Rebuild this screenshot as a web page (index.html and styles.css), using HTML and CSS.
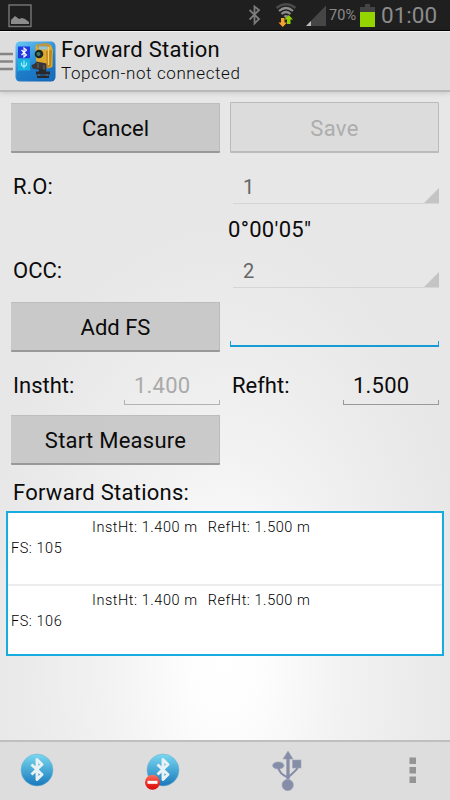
FILE: index.html
```html
<!DOCTYPE html>
<html lang="en">
<head>
<meta charset="utf-8">
<title>Forward Station</title>
<link rel="stylesheet" href="styles.css">
</head>
<body>
<div class="screen">
  <div class="status">
    <svg class="picture" width="24" height="24" viewBox="0 0 24 24"><rect x="1" y="1" width="22" height="21.500" fill="none" stroke="#777" stroke-width="1.400"/><path d="M3 20v-4l4-4 4 3 3-1 3 1 4 3v2z" fill="#8c8c8c"/></svg>
    <svg class="system" width="96" height="26" viewBox="0 0 96 26" fill="none">
      <path d="M.500 9L10 18L5.500 22.500V5.500L10 9L.500 18.500" stroke="#7c7c7c" stroke-width="1.800"/>
      <path d="M27.500 7Q37 -.500 46.500 7" stroke="#4a4a4a" stroke-width="2.400"/>
      <path d="M30 10Q37 4 44 10M32.500 13Q37 9 41.500 13" stroke="#8d8d8d" stroke-width="2.200"/>
      <path d="M34.500 15Q37 13 39.500 15L37 17.500z" fill="#8d8d8d"/>
      <path d="M32 17h3.500v4.500h2.500l-4.250 4.500-4.250-4.500H32z" fill="#f7a22c"/>
      <path d="M38 23h3.500v-4.500h2.500l-4.250-4.500-4.250 4.500H38z" fill="#8fce00"/>
      <path d="M57 25L77 4.500V25z" fill="#464646"/><path d="M57 25l5-5v5z" fill="#bbb"/>
    </svg>
    <span class="percent">70%</span>
    <svg class="battery" width="15" height="23" viewBox="0 0 15 23"><path d="M5 0h5v3h5v5H0V3h5z" fill="#444"/><rect y="8" width="15" height="15" fill="#94d500"/></svg>
    <span class="clock">01:00</span>
  </div>

  <header class="actionbar">
    <svg class="drawer" width="13" height="20" viewBox="0 0 13 20"><path d="M0 2h13M0 9.500h13M0 17h13" stroke="#858588" stroke-width="2.600"/></svg>
    <svg class="logo" width="41" height="41" viewBox="0 0 41 41">
      <defs>
        <linearGradient id="app" x1="0" y1="0" x2=".6" y2="1"><stop offset="0" stop-color="#6cc9f6"/><stop offset=".5" stop-color="#2f93d9"/><stop offset="1" stop-color="#1769b8"/></linearGradient>
      </defs>
      <rect x=".5" y=".5" width="40" height="40" rx="4.500" fill="url(#app)"/>
      <path d="M2 31Q18 25 39 12V36q0 3-3 3H5q-3 0-3-3z" fill="#1975c5" opacity=".6"/>
      <rect x="3" y="5.500" width="12" height="12" fill="#2038df"/><rect x="3" y="17.500" width="12" height="12" fill="#18b2df"/>
      <path d="M6.500 9l5 5-2.500 2V7l2.500 2-5 5" fill="none" stroke="#fff" stroke-width="1.100"/>
      <path d="M9 19.500v8M6.500 21.500v2.500l2.500 2 2.500-2v-2.500" fill="none" stroke="#a5ecff" stroke-width="1.200"/>
      <path d="M20.500 9V5l1.500-1.500 1 3h9l1-4 3 1.500 2 5-.5 17-5 1.500-4-3-7-1z" fill="#dba92f"/>
      <path d="M21 3.500l9-1.500 5 1v2.500l-12 1z" fill="#b9974a"/>
      <path d="M24 5.500h8.500v3H24z" fill="#8fc5df"/>
      <path d="M31 10l6-1-1 16-4 2z" fill="#bd8520"/>
      <path d="M33.500 6v18" stroke="#f1cf65" stroke-width="1.300"/>
      <circle cx="24" cy="13" r="4.300" fill="#1d2522"/><circle cx="23.500" cy="13" r="2" fill="#447b61"/>
      <path d="M16.500 24l3-1 2-2.500 10 2v5l-6 1.500-8-1.500z" fill="#393536"/>
      <path d="M24 28h7v3h-7zM21 30.500h14v3H21zM22 34.500h12v2.500H22z" fill="#2a2829"/>
      <path d="M23 22v5M29 24v5M24 33v2M32 33v2" stroke="#6d6a66"/>
    </svg>
    <div class="titles">
      <div class="title">Forward Station</div>
      <div class="subtitle">Topcon-not connected</div>
    </div>
  </header>

  <main class="content">
    <div class="row row-top">
      <button class="btn">Cancel</button>
      <button class="btn disabled">Save</button>
    </div>
    <div class="row row-spin">
      <span class="label">R.O:</span>
      <div class="spinner"><span>1</span><i></i></div>
    </div>
    <div class="angle">0°00'05"</div>
    <div class="row row-spin">
      <span class="label">OCC:</span>
      <div class="spinner"><span>2</span><i></i></div>
    </div>
    <div class="row row-add">
      <button class="btn">Add FS</button>
      <div class="edit active"></div>
    </div>
    <div class="row row-heights">
      <div class="field"><span class="label">Instht:</span><div class="edit off">1.400</div></div>
      <div class="field"><span class="label">Refht:</span><div class="edit">1.500</div></div>
    </div>
    <div class="row row-measure"><button class="btn wide-text">Start Measure</button></div>
    <div class="heading">Forward Stations:</div>
    <div class="list">
      <div class="item">
        <div class="heights"><span>InstHt: 1.400 m</span><span>RefHt: 1.500 m</span></div>
        <div class="name">FS: 105</div>
      </div>
      <div class="item">
        <div class="heights"><span>InstHt: 1.400 m</span><span>RefHt: 1.500 m</span></div>
        <div class="name">FS: 106</div>
      </div>
    </div>
  </main>

  <footer class="bottombar">
    <svg class="ic-bt" width="34" height="34" viewBox="0 0 34 34">
      <defs><linearGradient id="orb" x1="0" y1="0" x2="0" y2="1"><stop offset="0" stop-color="#7bd8f0"/><stop offset=".5" stop-color="#48a9d6"/><stop offset="1" stop-color="#1878bd"/></linearGradient></defs>
      <circle cx="17" cy="17" r="16" fill="url(#orb)" stroke="#75b4d2" stroke-width=".6"/>
      <path d="M11.500 11.500l10.500 10-5 5V6.500l5 5-10.500 10" fill="none" stroke="#e9f1f5" stroke-width="2.900" stroke-linejoin="round"/>
    </svg>
    <svg class="ic-off" width="36" height="37" viewBox="0 0 36 37">
      <defs><linearGradient id="stop" x1="0" y1="0" x2="0" y2="1"><stop offset="0" stop-color="#f57664"/><stop offset=".5" stop-color="#ee3228"/><stop offset="1" stop-color="#d70808"/></linearGradient></defs>
      <circle cx="19" cy="17" r="16" fill="url(#orb)" stroke="#75b4d2" stroke-width=".6"/>
      <path d="M13.500 11.500l10.500 10-5 5V6.500l5 5-10.500 10" fill="none" stroke="#e9f1f5" stroke-width="2.900" stroke-linejoin="round"/>
      <circle cx="8.500" cy="29.300" r="7.500" fill="url(#stop)"/><rect x="3.500" y="27.800" width="10" height="3" fill="#fff"/>
    </svg>
    <svg class="ic-usb" width="30" height="42" viewBox="0 0 30 42">
      <g fill="#858da9" stroke="#a0a4b3" stroke-width=".6">
        <path d="M16 1l5 8h-3.500v20h-3V9H11z"/>
        <ellipse cx="6.300" cy="15.500" rx="5.700" ry="3.600"/><rect x="20.500" y="10" width="8.500" height="8"/><circle cx="15.700" cy="35" r="5.700"/>
      </g>
      <path d="M6.500 18q1 6 9.500 9.500M25.500 18q-1 2-9.500 9.500" fill="none" stroke="#858da9" stroke-width="2"/>
    </svg>
    <svg class="ic-more" width="8" height="27" viewBox="0 0 8 27"><path d="M.5.500h6.500V7H.5zM.5 10h6.500v6.500H.5zM.5 19.500h6.500V26H.5z" fill="#949494"/></svg>
  </footer>
</div>
</body>
</html>
```
FILE: styles.css
```css
* { box-sizing: border-box; }
body { margin: 0; font-family: Roboto, "Liberation Sans", sans-serif; color: #0b0b0b; }
svg { display: block; flex: none; }

.screen {
  display: flex; flex-direction: column; width: 450px; height: 800px; overflow: hidden;
  background: radial-gradient(ellipse 250px 440px at 225px 660px, #fff 0%, #fdfdfd 15%, #f2f2f2 48%, #ebebeb 78%, #e7e7e7 100%);
}

.status {
  display: flex; flex: none; align-items: flex-start; height: 31px; padding-left: 8px;
  background: #1f1f1f; border-bottom: 1px solid #000; color: #8c8c8c; white-space: nowrap;
}
.picture { margin-top: 4px; }
.system { margin: 1px 0 0 217px; }
.percent { width: 30px; margin: 7px 0 0 -16px; font-size: 14.500px; line-height: 18px; letter-spacing: .1px; }
.battery { margin: 4px 0 0 1px; }
.percent, .clock { flex: none; }
.clock { margin: 0 0 0 6px; font-size: 22.500px; line-height: 31px; }

.actionbar {
  display: flex; flex: none; height: 61px; background: #ddd;
  border-top: 1px solid #f0f0f0; border-bottom: 2px solid #b9b9b9;
  box-shadow: 0 1px 5px rgba(0, 0, 0, .14);
}
.drawer { margin-top: 20px; }
.logo { margin: 9px 0 0 2px; }
.titles { margin-left: 5px; white-space: nowrap; }
.title { margin-top: 4px; font-size: 22px; line-height: 28px; letter-spacing: .25px; }
.subtitle { margin-top: -2px; font-size: 17px; font-weight: 300; line-height: 22px; letter-spacing: .6px; }

.content { flex: 1; padding: 10px 11px 0; font-size: 22px; }
.row { display: grid; grid-template-columns: 209px 209px; gap: 10px; }
.btn {
  height: 50px; margin: 1px 0 0; padding: 3px 0 0; border: 0; border-bottom: 2px solid #999; border-radius: 1px;
  background: rgba(195, 195, 195, .85); box-shadow: inset 0 1px #bdbdbd, inset -1px 0 #bbb;
  color: #0b0b0b; font: 22px/26px Roboto, "Liberation Sans", sans-serif;
}
.btn.disabled { height: 51px; margin: 0; border: 1px solid #bbb; border-bottom-width: 2px; background: #dcdcdc; box-shadow: none; color: #adadad; letter-spacing: .4px; }
.btn.wide-text { letter-spacing: .25px; }
.row-top { height: 51px; }
.row-spin { height: 51px; }
.label { padding: 21px 0 0 2px; line-height: 26px; }
.spinner {
  display: flex; justify-content: space-between; align-items: flex-end; height: 51px; margin-left: 3px;
  border-bottom: 1px solid #d5d5d5; color: #666; font-size: 20px;
}
.spinner span { padding: 0 0 4px 10px; line-height: 24px; }
.spinner i { width: 15px; height: 15px; background: #c4c4c4; clip-path: polygon(100% 0, 100% 100%, 0 100%); }
.angle { height: 33px; padding: 13px 0 0 217px; line-height: 26px; letter-spacing: .3px; white-space: nowrap; }
.row-add { height: 51px; margin-top: 13px; }
.edit { position: relative; border-bottom: 1px solid #999; line-height: 26px; }
.edit::after {
  content: ""; position: absolute; right: 0; bottom: 0; left: 0; height: 4px;
  border: solid #999; border-width: 0 1px;
}
.edit.off { color: #aaa; border-color: #b3b3b3; }
.edit.off::after { border-color: #b3b3b3; }
.edit.active { height: 46px; border-bottom: 2px solid #159bd5; }
.edit.active::after { border-color: #159bd5; }
.row-heights { height: 53px; }
.field { display: flex; justify-content: space-between; }
.field .edit { width: 96px; height: 53px; padding: 21px 0 0 10px; letter-spacing: .2px; }
.row-measure { height: 51px; margin-top: 9px; }
.heading { height: 46px; padding: 15px 0 0 2px; line-height: 26px; letter-spacing: .25px; }
.list { height: 145px; margin: 0 -5px; border: 2px solid #16acdf; background: #fff; }
.item { height: 73px; padding-top: 5px; border-bottom: 2px solid #ededed; font-size: 14.500px; font-weight: 300; line-height: 20px; letter-spacing: .55px; color: #000; white-space: nowrap; }
.item:last-child { height: 68px; border: 0; }
.heights { display: flex; gap: 10px; padding-left: 84px; }
.name { padding: 1px 0 0 3px; }

.bottombar { display: flex; flex: none; height: 60px; background: #ddd; border-top: 2px solid #bfbfbf; }
.ic-bt { margin: 11px 0 0 20px; }
.ic-off { margin: 11px 0 0 90px; }
.ic-usb { margin: 8px 0 0 92px; }
.ic-more { margin: 15px 0 0 107px; }
```
